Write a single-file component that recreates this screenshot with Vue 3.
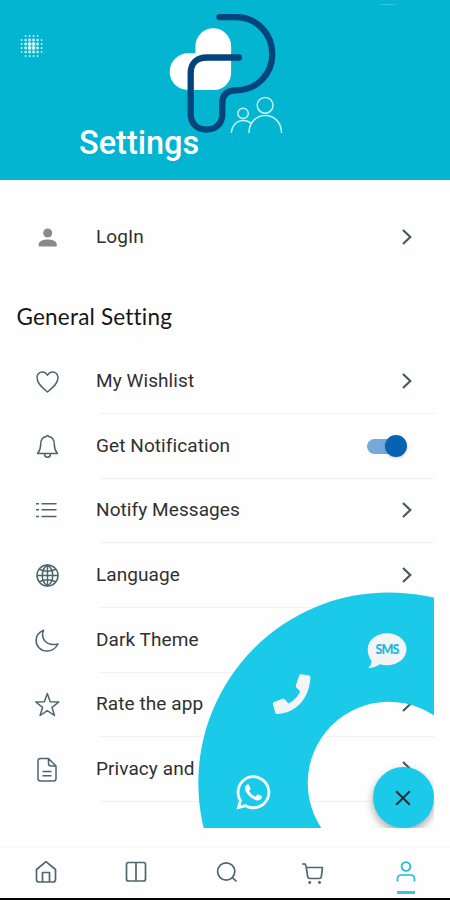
<template>
  <div class="screen">
    <header class="header">
      <svg class="header-art" viewBox="0 0 450 180">
        <!-- pattern of dots -->
        <g fill="#c8f4f8">
          <circle
            v-for="dot in dots"
            :key="dot.id"
            :cx="dot.x"
            :cy="dot.y"
            :r="dot.r"
          />
        </g>
        <rect x="380" y="4" width="15" height="1" fill="#35c3d9" />
        <path
          fill="#fff"
          d="M195.5 46a17.8 17.8 0 0 1 35.6 0V73a17 17 0 0 1-17 17H188a18.3 18.3 0 0 1 0-36.7h7.5z"
        />
        <path
          class="logo-line"
          d="M219.5 17.2H236C257 17.2 272.3 34 272.3 54S257 90.3 236 90.3C227 90.3 222.3 95 222.3 103V114C222.3 124 215.5 129.6 206.5 129.6S190.7 124 190.7 114V73C190.7 63 197 57.5 207 57.5H239"
        />
        <g fill="none" stroke="#c4f3f8" stroke-width="1.5">
          <circle cx="243.1" cy="113.4" r="5.2" />
          <path d="M231.4 133c.3-7.4 5.5-12.4 11.8-12.4 3.2 0 6 1.2 8.3 3.2" />
          <circle cx="265.1" cy="105.3" r="7.9" />
          <path d="M249 133c0-10.3 7-17.5 16.2-17.5s16.3 7.2 16.3 17.5" />
        </g>
      </svg>
      <h1 class="title">Settings</h1>
    </header>

    <main class="content">
      <div class="row login">
        <svg class="row-icon" viewBox="0 0 28 28">
          <g fill="#8a8a8a">
            <circle cx="14.7" cy="10" r="4.5" />
            <path d="M5.7 23.4v-2.2c0-3.3 5.5-4.7 9-4.7s9 1.4 9 4.7v2.2z" />
          </g>
        </svg>
        <span class="label">LogIn</span>
        <svg class="arrow" viewBox="0 0 12 18"><path d="M2 2l7.3 7L2 16" /></svg>
      </div>

      <h2 class="section-title">General Setting</h2>

      <div v-for="item in items" :key="item.label" class="row item">
        <svg class="row-icon line" viewBox="0 0 28 28">
          <path v-for="d in item.paths" :key="d" :d="d" />
        </svg>
        <span class="label">{{ item.label }}</span>
        <button
          v-if="item.toggle"
          class="switch"
          :class="{ on: notify }"
          @click="notify = !notify"
        >
          <span class="knob"></span>
        </button>
        <svg v-else class="arrow" viewBox="0 0 12 18">
          <path d="M2 2l7.3 7L2 16" />
        </svg>
      </div>
    </main>

    <!-- Contact menu -->
    <div v-if="menuOpen" class="contact">
      <svg class="contact-art" viewBox="198 592 236 236">
        <path
          fill="#1bc9e9"
          fill-rule="evenodd"
          d="M198.3 783a190.5 190.5 0 1 1 381 0a190.5 190.5 0 1 1-381 0zM307.7 783a81.2 81.2 0 1 0 162.4 0a81.2 81.2 0 1 0-162.4 0z"
        />
        <!-- phone -->
        <path
          fill="#f2f4f7"
          d="M301.3 674.3L309 675.6Q310.6 676 310.4 677.6C309.5 699 295.5 713.5 277.3 714Q275.6 714.2 275.2 712.6L272.9 704.3Q272.5 702.7 274 702L282.5 698.8Q284 698.3 285 699.6L288.3 703.5C293 701.3 298 696.5 300.2 691.2L296.5 687.7Q295.3 686.6 295.9 685.2L299.2 675.5Q299.8 674 301.3 674.3z"
        />
        <!-- whatsapp -->
        <path
          fill="#f7fcff"
          transform="translate(236.5 772.8) scale(.0755 .0765)"
          d="M380.9 97.1C339 55.1 283.2 32 223.9 32c-122.4 0-222 99.6-222 222 0 39.1 10.2 77.3 29.6 111L0 480l117.7-30.9c32.4 17.7 68.9 27 106.1 27h.1c122.3 0 224.1-99.6 224.1-222 0-59.3-25.2-115-67.1-157zm-157 341.6c-33.2 0-65.7-8.9-94-25.7l-6.7-4-69.8 18.3L72 359.2l-4.4-7c-18.5-29.4-28.2-63.3-28.2-98.2 0-101.7 82.8-184.5 184.6-184.5 49.3 0 95.6 19.2 130.4 54.1 34.8 34.9 56.2 81.2 56.1 130.5 0 101.8-84.9 184.6-186.6 184.6zm101.2-138.2c-5.5-2.8-32.8-16.2-37.9-18-5.1-1.9-8.8-2.8-12.5 2.8-3.7 5.6-14.3 18-17.6 21.8-3.2 3.7-6.5 4.2-12 1.4-32.6-16.3-54-29.1-75.5-66-5.7-9.8 5.7-9.1 16.3-30.3 1.8-3.7.9-6.9-.5-9.7-1.4-2.8-12.5-30.1-17.1-41.2-4.5-10.8-9.1-9.3-12.5-9.5-3.2-.2-6.9-.2-10.6-.2-3.7 0-9.7 1.4-14.8 6.9-5.1 5.6-19.4 19-19.4 46.3 0 27.3 19.9 53.7 22.6 57.4 2.8 3.7 39.1 59.7 94.8 83.8 35.2 15.2 49 16.5 66.6 13.9 10.7-1.6 32.8-13.4 37.4-26.4 4.6-13 4.6-24.1 3.2-26.4-1.3-2.5-5-3.9-10.5-6.6z"
        />
        <!-- sms -->
        <path
          fill="#f2f4f7"
          d="M387 633.3c10.9 0 19.5 7 19.5 16s-8.6 16-19.5 16c-2.6 0-5-.4-7.2-1.1-2.8 2.3-7 3.8-11.7 3.9 2-1.9 3.3-4.2 3.6-7.2-2.6-2.9-4-7-4-11.600 0-9 8.400-16 19.300-16z"
        />
        <text class="sms" x="375.5" y="654.2" textLength="24" lengthAdjust="spacing">SMS</text>
      </svg>
      <button class="fab">
        <svg width="18" height="18" viewBox="0 0 18 18">
          <path d="M2.2 2.2l13.6 13.6M15.8 2.2L2.2 15.8" />
        </svg>
      </button>
    </div>

    <nav class="tabbar">
      <button
        v-for="tab in tabs"
        :key="tab.name"
        class="tab"
        :class="[tab.name, { active: tab.name === activeTab }]"
        @click="activeTab = tab.name"
      >
        <svg viewBox="0 0 24 24">
          <path v-for="d in tab.paths" :key="d" :d="d" />
        </svg>
      </button>
    </nav>
  </div>
</template>

<script setup>
import { ref } from "vue";

const notify = ref(true);
const menuOpen = ref(true);
const activeTab = ref("profile");

// dots shrink towards the edges, corners are left out
const dots = [];
for (let i = 0; i < 6; i++) {
  for (let j = 0; j < 6; j++) {
    const dist = Math.hypot(i - 2.5, j - 2.5);
    if (dist > 3.2) continue;
    dots.push({
      id: `${i}-${j}`,
      x: 21.6 + i * 4,
      y: 36 + j * 4,
      r: Math.max(0.6, 2.2 - dist * 0.45),
    });
  }
}

const items = [
  {
    label: "My Wishlist",
    paths: [
      "M14.5 25C9.5 21 4 16.5 4 10.8C4 7.2 6.5 4.9 9.3 4.9C11.7 4.9 13.5 6.2 14.5 8.3C15.5 6.2 17.3 4.9 19.7 4.9C22.5 4.9 25 7.2 25 10.8C25 16.5 19.5 21 14.5 25z",
    ],
  },
  {
    label: "Get Notification",
    toggle: true,
    paths: [
      "M4.5 21.5C7 18.5 7.7 17 7.7 12.5C7.7 8 10.1 5 13.5 4.6C13.5 3 15.5 3 15.5 4.6C18.9 5 21.3 8 21.3 12.5C21.3 17 22 18.5 24.5 21.5z",
      "M11.5 22C11.5 26.3 17.5 26.3 17.5 22",
    ],
  },
  {
    label: "Notify Messages",
    paths: [
      "M8.5 7.7H23.5M8.5 13.7H23.5M8.5 20.5H23.5",
      "M3 7.7H6M3 13.7H6M3 20.5H6",
    ],
  },
  {
    label: "Language",
    paths: [
      "M25 14.5A10.5 10.5 0 1 1 4 14.5A10.5 10.5 0 1 1 25 14.5z",
      "M14.5 4C7.5 8.5 7.5 20.5 14.5 25C21.5 20.5 21.5 8.5 14.5 4zM14.5 4V25",
      "M4 14.5H25M6.3 8.2C11.5 10.7 17.5 10.7 22.7 8.2M6.3 20.8C11.5 18.3 17.5 18.3 22.7 20.8",
    ],
  },
  {
    label: "Dark Theme",
    paths: [
      "M10.6 4.2C6.1 6 3.1 9.6 3.1 14.5C3.1 20.5 7.8 25 13.8 25C18.7 25 22.7 22.5 25 18C17.3 20 9.8 16.5 9.6 9C9.6 7.2 9.9 5.6 10.6 4.2z",
    ],
  },
  {
    label: "Rate the app",
    paths: [
      "M14.3 3.5L17.2 11.8L25.8 12L19 17.3L21.5 25.5L14.3 20.7L7.1 25.5L9.6 17.3L2.8 12L11.4 11.8z",
    ],
  },
  {
    label: "Privacy and",
    paths: [
      "M7.5 3.5H15.5L23 11V23.5Q23 26 20.5 26H7.5Q5 26 5 23.5V6Q5 3.5 7.5 3.5zM15.5 3.5V8.5Q15.5 11 18 11H23",
      "M9.5 16.5H18.5M9.5 20.7H18.5",
    ],
  },
];

const tabs = [
  {
    name: "home",
    paths: [
      "M2.5 9.5L12 1.7L21.5 9.5V19.5Q21.5 22 19 22H5Q2.5 22 2.5 19.5z",
      "M8.5 22V12.5H15.5V22",
    ],
  },
  {
    name: "catalog",
    paths: [
      "M4.5 2.5H19.5Q21.5 2.5 21.5 4.5V19Q21.5 21 19.5 21H4.5Q2.5 21 2.5 19V4.5Q2.5 2.5 4.5 2.5z",
      "M12 2.5V21",
    ],
  },
  {
    name: "search",
    paths: [
      "M19.8 11.5A8.6 8.6 0 1 1 2.6 11.5A8.6 8.6 0 1 1 19.8 11.5z",
      "M17.3 17.6L21.5 21.5",
    ],
  },
  {
    name: "cart",
    paths: [
      "M1 4H4.2L5.3 7.5H21.5L20.3 16.8Q20 18.5 18 18.5H9Q7.2 18.5 6.7 16.8L5.3 7.5",
      "M8.2 21.9H9.2V22.9H8.2zM18 21.9H19V22.9H18z",
    ],
  },
  {
    name: "profile",
    paths: [
      "M16.4 6.5A4.4 4.4 0 1 1 7.6 6.5A4.4 4.4 0 1 1 16.4 6.5z",
      "M3.5 21.5V19Q3.5 15 7.5 15H16.5Q20.5 15 20.5 19V21.5",
    ],
  },
];
</script>

<style>
body {
  margin: 0;
}
</style>

<style scoped>
.screen {
  position: relative;
  display: flex;
  flex-direction: column;
  box-sizing: border-box;
  width: 450px;
  height: 900px;
  overflow: hidden;
  background: #fefefe;
  border-bottom: 2px solid #050505;
  font-family: Roboto, sans-serif;
}

button {
  border: 0;
  padding: 0;
  cursor: pointer;
}

.header {
  position: relative;
  flex: none;
  height: 179.5px;
  box-sizing: border-box;
  padding: 123px 0 0 79px;
  background: #03b5d1;
}

.header-art {
  position: absolute;
  left: 0;
  top: 0;
  width: 450px;
  height: 180px;
}

.logo-line {
  fill: none;
  stroke: #03457b;
  stroke-width: 6.3;
  stroke-linecap: round;
}

.title {
  position: relative;
  margin: 0;
  font-size: 32.5px;
  line-height: 40px;
  font-weight: 500;
  color: #fff;
}

.content {
  flex: 1;
  min-height: 0;
}

.row {
  display: flex;
  align-items: center;
  box-sizing: border-box;
  height: 64.7px;
  padding: 0 37px 1px 33px;
}

.login {
  margin-top: 26px;
}

.row-icon {
  flex: none;
  width: 28px;
  height: 28px;
  margin-right: 35px;
}

.line {
  fill: none;
  stroke: #4c656d;
  stroke-width: 1.5;
  stroke-linejoin: round;
}

.label {
  flex: 1;
  padding-bottom: 1px;
  font-size: 19px;
  letter-spacing: 0.08px;
  color: #303030;
}

.arrow {
  width: 12px;
  height: 18px;
  fill: none;
  stroke: #465b61;
  stroke-width: 2.2;
}

.section-title {
  margin: 31px 0 0 16.5px;
  height: 32px;
  font-family: Lato, sans-serif;
  font-size: 22.5px;
  line-height: 32px;
  font-weight: 400;
  letter-spacing: 0.2px;
  font-variant-ligatures: none;
  color: #161616;
}

.section-title + .item {
  margin-top: 16px;
}

.item {
  background: linear-gradient(#f2f2f3, #f2f2f3) 100px 100% / 335px 1px no-repeat;
}

.switch {
  position: relative;
  width: 40px;
  height: 22px;
  margin-right: 6px;
  background: none;
}

.switch::before {
  content: "";
  position: absolute;
  left: 0;
  top: 4px;
  width: 34px;
  height: 15px;
  border-radius: 8px;
  background: #c9c9c9;
}

.switch.on::before {
  background: #74aada;
}

.knob {
  position: absolute;
  left: 0;
  top: 0;
  width: 22px;
  height: 22px;
  border-radius: 50%;
  background: #f5f5f5;
  box-shadow: 0 1px 3px rgba(0, 0, 0, 0.2);
}

.switch.on .knob {
  left: 18px;
  background: #0762b4;
}

.contact {
  position: absolute;
  left: 198px;
  top: 592px;
  width: 235.5px;
  height: 236px;
  overflow: hidden;
}

.contact-art {
  position: absolute;
  left: 0;
  top: 0;
  width: 236px;
  height: 236px;
}

.sms {
  font-family: Lato, sans-serif;
  font-size: 12.5px;
  font-weight: 900;
  fill: #18b9dc;
}

.fab {
  position: absolute;
  right: 0;
  bottom: 0;
  display: flex;
  align-items: center;
  justify-content: center;
  width: 61px;
  height: 61px;
  border-radius: 50%;
  background: #1bc9e9;
  box-shadow: 0 4px 8px rgba(0, 0, 0, 0.35);
}

.fab path {
  stroke: #203038;
  stroke-width: 2;
}

.tabbar {
  flex: none;
  display: flex;
  box-sizing: border-box;
  height: 53px;
  padding-left: 1px;
  border-top: 3px solid #f9f9f9;
}

.tab {
  display: flex;
  flex-direction: column;
  align-items: center;
  box-sizing: border-box;
  width: 90px;
  padding-top: 12px;
  background: none;
  color: #50666d;
}

.tab.search {
  padding-left: 3px;
}

.tab.cart {
  padding-right: 4px;
}

.tab svg {
  width: 24px;
  height: 24px;
  fill: none;
  stroke: currentColor;
  stroke-width: 1.7;
  stroke-linejoin: round;
}

.tab.profile {
  padding-left: 1px;
}

.tab.active {
  color: #20bddb;
}

.tab.active::after {
  content: "";
  width: 18px;
  height: 3px;
  margin-top: 7px;
  background: #3cc3dc;
}
</style>
